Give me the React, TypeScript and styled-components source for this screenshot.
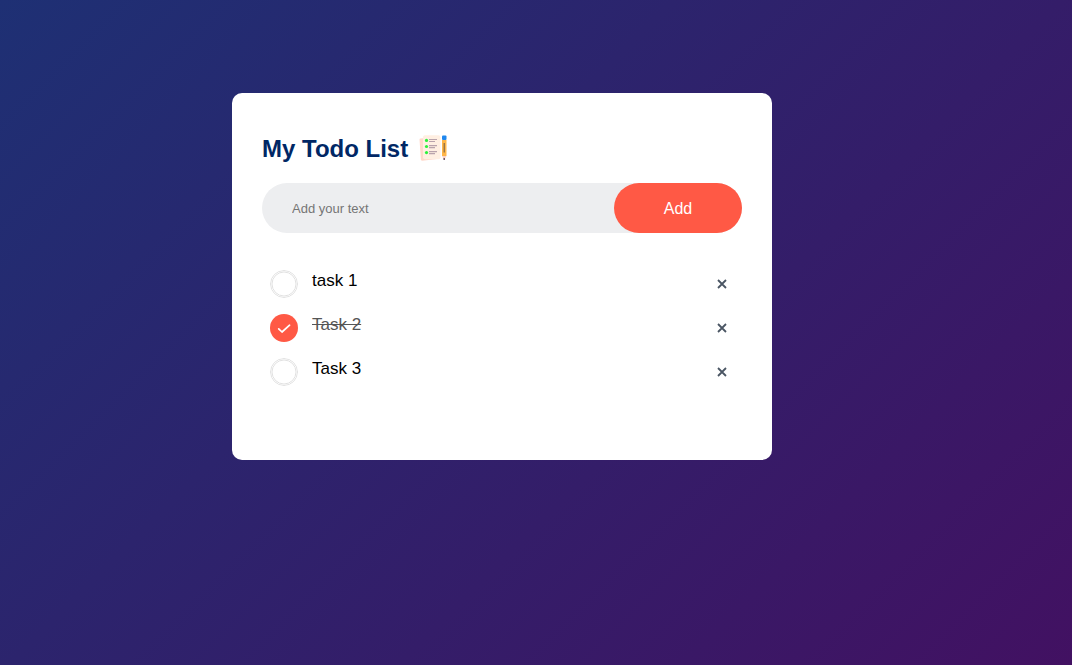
import React, { useState } from "react";
import styled, { createGlobalStyle } from "styled-components";

const GlobalStyle = createGlobalStyle`
  * { box-sizing: border-box; margin: 0; padding: 0; font-family: "Liberation Sans", Arial, sans-serif; }
`;

const Page = styled.div`
  min-height: 100vh;
  padding: 93px 78px 20px 10px;
  background: linear-gradient(135deg, #1e3074, #421162);
`;

const Card = styled.main`
  width: 100%;
  max-width: 540px;
  margin: 0 auto;
  padding: 40px 30px 70px;
  border-radius: 10px;
  background: #fff;
`;

const Title = styled.h1`
  display: flex;
  align-items: center;
  margin-bottom: 18px;
  color: #002765;
  font-size: 24px;
  line-height: 32px;
`;

const TitleIcon = styled.svg`
  width: 30px;
  height: 30px;
  margin-left: 10px;
`;

const Form = styled.form`
  display: flex;
  align-items: center;
  margin-bottom: 25px;
  padding-left: 20px;
  border-radius: 30px;
  background: #edeef0;
`;

const Field = styled.input`
  flex: 1;
  min-width: 0;
  padding: 10px;
  border: 0;
  outline: 0;
  background: transparent;
  font-size: 13px;
`;

const AddButton = styled.button`
  width: 128px;
  height: 50px;
  padding-top: 1px;
  border: 0;
  border-radius: 40px;
  background: #ff5945;
  color: #fff;
  font-size: 16px;
  cursor: pointer;
`;

const Tasks = styled.ul`
  list-style: none;
`;

const Task = styled.li`
  display: flex;
  align-items: center;
  height: 44px;
  padding-left: 8px;
`;

const Tick = styled.input`
  appearance: none;
  flex: none;
  width: 28px;
  height: 28px;
  margin-top: 8px;
  border-radius: 50%;
  background: url("data:image/svg+xml,%3Csvg xmlns='http://www.w3.org/2000/svg' viewBox='0 0 28 28'%3E%3Cg fill='none'%3E%3Ccircle cx='14' cy='14' r='13.5' stroke='%23dcdcdc' stroke-width='.9'/%3E%3Ccircle cx='14' cy='14' r='12' stroke='%23dedede' stroke-width='.9'/%3E%3C/g%3E%3C/svg%3E");
  cursor: pointer;

  &:checked {
    background: #ff5945 url("data:image/svg+xml,%3Csvg xmlns='http://www.w3.org/2000/svg' viewBox='0 0 28 28'%3E%3Cpath d='M8.7 14.8l3.3 3.2 7.6-6.8' fill='none' stroke='%23fff' stroke-width='1.7' stroke-linecap='round' stroke-linejoin='round'/%3E%3C/svg%3E");
  }
`;

const TaskLabel = styled.label<{ $done: boolean }>`
  flex: 1;
  padding: 2px 0 0 14px;
  color: ${(p) => (p.$done ? "#555" : "#000")};
  font-size: 17px;
  line-height: 20px;
  text-decoration: ${(p) => (p.$done ? "line-through" : "none")};
  cursor: pointer;
`;

const RemoveButton = styled.button`
  display: grid;
  place-items: center;
  width: 40px;
  height: 40px;
  margin-top: 7px;
  border: 0;
  border-radius: 50%;
  background: transparent;
  color: #4a5563;
  cursor: pointer;
`;

const Notepad = () => (
  <TitleIcon viewBox="0 0 30 30" aria-hidden="true">
    <path d="M1.5 5.5Q1.5 4.5 2.5 4.4L17 3l2 22-14.5 1.8Q3 27 2.9 25.5z" fill="#ffd9cc" />
    <rect x="5" y="1.2" width="17.5" height="24" rx="2" fill="#ffefe2" />
    <g fill="#2cf03c">
      <circle cx="8.5" cy="6.4" r="1.6" />
      <circle cx="8.5" cy="12.5" r="1.6" />
      <circle cx="8.5" cy="18.6" r="1.6" />
    </g>
    <path d="M11 5.5h8M11 7.5h6M11 11.6h8M11 13.6h6M11 17.7h8M11 19.7h6" stroke="#b9a3ac" strokeWidth="1.2" />
    <path d="M24 6h4.500v16h-4.500z" fill="#ffb648" />
    <rect x="24" y="1.500" width="4.500" height="4.500" rx="1" fill="#1f87ee" />
    <path d="M26.200 9v9.500" stroke="#6f5a48" strokeWidth="1" />
    <path d="M24 22h4.500l-2.200 4z" fill="#fbd3c8" />
    <circle cx="26.200" cy="25" r="0.900" fill="#5a4455" />
  </TitleIcon>
);

const Cross = () => (
  <svg width="10" height="10" viewBox="0 0 10 10" aria-hidden="true">
    <path d="M1 1l8 8M9 1l-8 8" stroke="currentColor" strokeWidth="1.8" />
  </svg>
);

type Item = { id: number; text: string; done: boolean };

export default function App() {
  const [items, setItems] = useState<Item[]>([
    { id: 1, text: "task 1", done: false },
    { id: 2, text: "Task 2", done: true },
    { id: 3, text: "Task 3", done: false },
  ]);
  const [text, setText] = useState("");

  const add = (e: React.FormEvent) => {
    e.preventDefault();
    if (!text.trim()) return;
    setItems([...items, { id: Date.now(), text: text.trim(), done: false }]);
    setText("");
  };
  const toggle = (id: number) =>
    setItems(items.map((i) => (i.id === id ? { ...i, done: !i.done } : i)));
  const remove = (id: number) => setItems(items.filter((i) => i.id !== id));

  return (
    <Page>
      <GlobalStyle />
      <Card>
        <Title>
          My Todo List
          <Notepad />
        </Title>
        <Form onSubmit={add}>
          <Field
            type="text"
            aria-label="Add your text"
            placeholder="Add your text"
            value={text}
            onChange={(e) => setText(e.target.value)}
          />
          <AddButton type="submit">Add</AddButton>
        </Form>
        <Tasks>
          {items.map((item) => (
            <Task key={item.id}>
              <Tick
                type="checkbox"
                id={`task-${item.id}`}
                checked={item.done}
                onChange={() => toggle(item.id)}
              />
              <TaskLabel htmlFor={`task-${item.id}`} $done={item.done}>
                {item.text}
              </TaskLabel>
              <RemoveButton type="button" aria-label={`Remove ${item.text}`} onClick={() => remove(item.id)}>
                <Cross />
              </RemoveButton>
            </Task>
          ))}
        </Tasks>
      </Card>
    </Page>
  );
}
